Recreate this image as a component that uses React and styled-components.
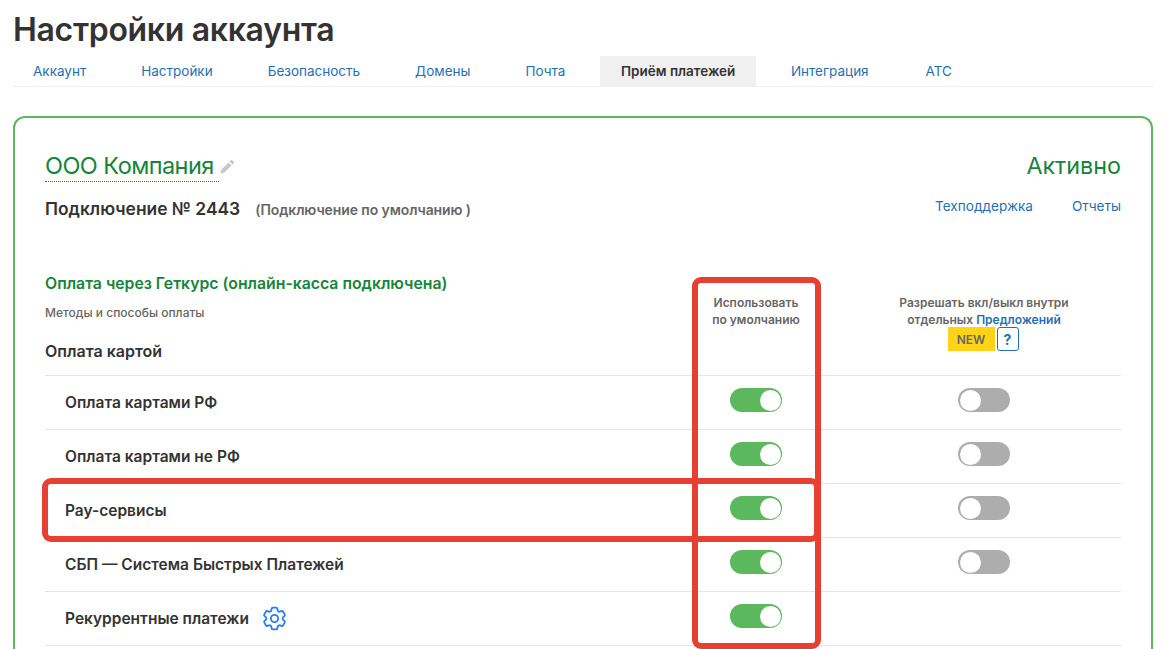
import React from 'react';
import styled, { createGlobalStyle } from 'styled-components';
import { HiOutlineCog6Tooth } from 'react-icons/hi2';

const Global = createGlobalStyle`
  html, body { margin: 0; padding: 0; background: #fff; height: 649px; overflow: hidden; }
  body { font-family: Inter, "Noto Sans", sans-serif; color: #333; }
`;
const Page = styled.div`position: relative; height: 649px; overflow: hidden; padding: 0 0 0 13px; box-sizing: border-box;`;
const Title = styled.h1`margin: 0; padding-top: 11px; font-size: 32px; line-height: 38px; font-weight: 600; color: #333; letter-spacing: -0.32px;`;
const Tabs = styled.nav`display: flex; margin-top: 6px; height: 31px; border-bottom: 1px solid #eee; width: 1140px;`;
const Tab = styled.a`
  display: flex; align-items: center; box-sizing: border-box; padding: 0 ${p => p.$active ? 20.6 : 20}px; margin: 1px ${p => p.$gap}px 0 0; font-size: 13.5px; height: 30px;
  color: ${p => p.$active ? '#333' : '#1f6fb5'}; font-weight: ${p => p.$active ? 600 : 400};
  background: ${p => p.$active ? '#f0f0f0' : 'transparent'};
`;
const Card = styled.section`margin-top: 29px; width: 1140px; box-sizing: border-box; border: 2px solid #5cb85c; border-bottom: 0; border-radius: 12px 12px 0 0; padding: 32px 30px 0; height: 540px;`;
const Head = styled.div`display: flex; justify-content: space-between; align-items: flex-start;`;
const CompanyRow = styled.div`display: flex; align-items: center; gap: 1px;`;
const Company = styled.div`color: #16853a; font-size: 23.5px; line-height: 31px; height: 31px; border-bottom: 1px dotted #1f6fb5; width: 174px; letter-spacing: -0.55px; white-space: nowrap;`;
const Status = styled.div`color: #16853a; font-size: 23.3px; line-height: 31px;`;
const Sub = styled.div`display: flex; justify-content: space-between; align-items: center; margin-top: 14px; height: 24px;`;
const ConnBox = styled.div`display: flex; align-items: baseline; gap: 15px;`;
const Conn = styled.span`font-size: 17.4px; font-weight: 600; color: #333;`;
const ConnNote = styled.span`font-size: 14px; font-weight: 600; color: #666; letter-spacing: -0.1px;`;
const Links = styled.div`display: flex; gap: 39px; margin-top: -4px;`;
const Link = styled.a`font-size: 13.6px; color: #1f6fb5;`;
const Top = styled.div`display: grid; grid-template-columns: 1fr 246px 210px 32px; height: 155px;`;
const Left = styled.div`display: flex; flex-direction: column; padding-top: 53px;`;
const PayTitle = styled.div`color: #16853a; font-size: 15.8px; font-weight: 600; line-height: 22px; white-space: nowrap;`;
const Methods = styled.div`color: #666; font-size: 12px; font-weight: 500; margin-top: 10px; line-height: 16px;`;
const Group = styled.div`color: #333; font-size: 16px; font-weight: 600; margin-top: 20px; line-height: 20px;`;
const ColHead = styled.div`text-align: center; font-size: 12px; font-weight: 600; line-height: 17px; color: #666; padding-top: 74px;`;
const Blue = styled.a`color: #1f6fb5;`;
const BadgeRow = styled.div`display: flex; justify-content: center; gap: 2px; margin: -1px 0 0 -2px;`;
const New = styled.span`display: flex; align-items: center; justify-content: center; width: 47px; height: 24px; background: #ffd417; color: #666; font-weight: 600;`;
const Help = styled.span`display: flex; align-items: center; justify-content: center; box-sizing: border-box; width: 22px; height: 24px; border: 1px solid #1f6fb5; border-radius: 3px; color: #1f6fb5; font-size: 14px; font-weight: 700;`;
const Row = styled.div`display: grid; grid-template-columns: 1fr 246px 210px 32px; height: 54px; border-top: 1px solid #e5e5e5; box-sizing: border-box; align-items: center; &:last-child { border-bottom: 1px solid #e5e5e5; height: 55px; }`;
const Label = styled.div`display: flex; align-items: center; gap: 9px; padding-left: 20px; font-size: 15.5px; font-weight: 600; color: #333;`;
const Cell = styled.div`display: flex; justify-content: center; padding-bottom: 5px;`;
const Switch = styled.span`
  display: flex; width: 52px; height: 24px; box-sizing: border-box; border-radius: 12px; padding: 1.5px;
  justify-content: ${p => p.$on ? 'flex-end' : 'flex-start'};
  background: ${p => p.$on ? '#5cb85c' : '#adadad'};
  &::after { content: ''; width: 21px; height: 21px; border-radius: 50%; background: #fff; }
`;
const Gear = styled(HiOutlineCog6Tooth)`color: #2b7de9; width: 29px; height: 29px; margin: -3px -3px -3px 2px; flex: none;`;
const Mark = styled.div`position: absolute; box-sizing: border-box; border: 6px solid #e83f33; border-radius: 9px; pointer-events: none;`;
const VMark = styled(Mark)`left: 692px; top: 277px; width: 129px; height: 372px;`;
const HMark = styled(Mark)`left: 42px; top: 478px; width: 778px; height: 64px;`;

const Pencil = () => (
  <svg width="15" height="15" viewBox="0 0 16 16" fill="#c8c8c8"><path d="M11.6 1.2a1 1 0 0 1 1.4 0l1.8 1.8a1 1 0 0 1 0 1.4l-1.5 1.5-3.2-3.2zM9.1 3.7l3.2 3.2-7.8 7.8-4 .8.8-4z"/></svg>
);

const tabs = [['Аккаунт',15],['Настройки',15],['Безопасность',15],['Домены',15],['Почта',15],['Приём платежей',15,true],['Интеграция',17],['АТС',0]];
const rows = [['Оплата картами РФ',true],['Оплата картами не РФ',true],['Pay-сервисы',true],['СБП — Система Быстрых Платежей',true],['Рекуррентные платежи',false,true]];

export default function App() {
  return (
    <Page>
      <Global />
      <Title>Настройки аккаунта</Title>
      <Tabs>{tabs.map(([t, g, a]) => <Tab key={t} $gap={g} $active={a}>{t}</Tab>)}</Tabs>
      <Card>
        <Head>
          <CompanyRow><Company>ООО Компания</Company><Pencil /></CompanyRow>
          <Status>Активно</Status>
        </Head>
        <Sub>
          <ConnBox><Conn>Подключение № 2443</Conn><ConnNote>(Подключение по умолчанию )</ConnNote></ConnBox>
          <Links><Link>Техподдержка</Link><Link>Отчеты</Link></Links>
        </Sub>
        <Top>
          <Left>
            <PayTitle>Оплата через Геткурс (онлайн-касса подключена)</PayTitle>
            <Methods>Методы и способы оплаты</Methods>
            <Group>Оплата картой</Group>
          </Left>
          <ColHead>Использовать<br />по умолчанию</ColHead>
          <ColHead>
            Разрешать вкл/выкл внутри<br />отдельных <Blue>Предложений</Blue>
            <BadgeRow><New>NEW</New><Help>?</Help></BadgeRow>
          </ColHead>
        </Top>
        {rows.map(([t, second, gear]) => (
          <Row key={t}>
            <Label>{t}{gear && <Gear />}</Label>
            <Cell><Switch $on /></Cell>
            <Cell>{second && <Switch />}</Cell>
          </Row>
        ))}
      </Card>
      <VMark />
      <HMark />
    </Page>
  );
}
